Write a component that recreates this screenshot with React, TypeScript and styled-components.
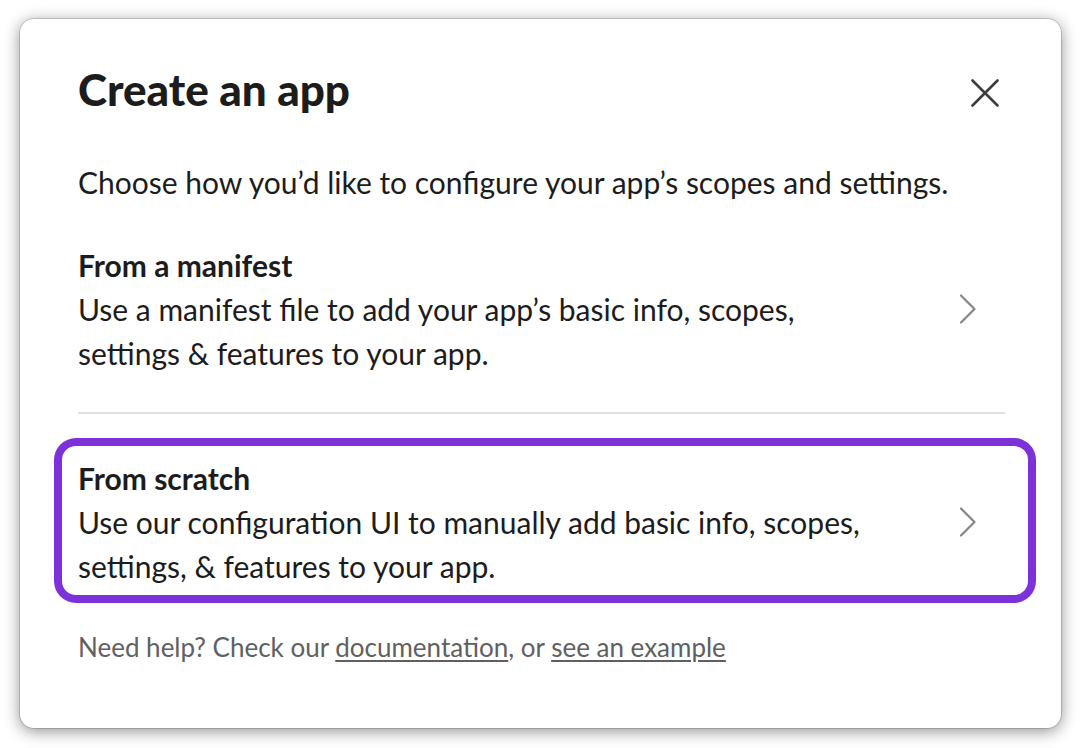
import React from "react";
import styled, { createGlobalStyle } from "styled-components";

const Global = createGlobalStyle`
  html, body { margin: 0; padding: 0; background: #ffffff; }
  body { font-family: Lato, "Noto Sans", sans-serif; color: #1d1c1d; }
  * { box-sizing: border-box; }
`;

const Page = styled.div`
  width: 1080px;
  height: 748px;
  padding: 19px 19px 0 20px;
`;

const Modal = styled.div`
  width: 1041px;
  height: 709px;
  background: #fff;
  border-radius: 14px;
  box-shadow: 0 0 0 1px rgba(0, 0, 0, 0.14), 0 3px 16px rgba(0, 0, 0, 0.45);
  display: flex;
  flex-direction: column;
  padding-top: 42px;
`;

const Header = styled.div`
  display: flex;
  align-items: center;
  justify-content: space-between;
  padding: 0 58px 0 58px;
  height: 56px;
`;

const Title = styled.h1`
  margin: 0;
  font-size: 44px;
  line-height: 56px;
  font-weight: 900;
  color: #1d1c1d;
`;

const CloseButton = styled.button`
  border: 0;
  background: none;
  padding: 0;
  margin-top: 8px;
  width: 36px;
  height: 36px;
  display: flex;
  align-items: center;
  justify-content: center;
  color: #3d3d3d;
  cursor: pointer;
`;

const Intro = styled.p`
  margin: 43px 0 0;
  padding: 0 58px;
  font-size: 30px;
  line-height: 44px;
`;

const Options = styled.div`
  margin: 21px 25px 0 34px;
  display: flex;
  flex-direction: column;
`;

const Option = styled.div<{ $focused?: boolean }>`
  display: flex;
  align-items: center;
  justify-content: space-between;
  padding: 18px 59px 15px 24px;
  border-radius: 22px;
  box-shadow: ${(p) => (p.$focused ? "inset 0 0 0 8px #7d31d9" : "none")};
  cursor: pointer;
`;

const OptionText = styled.div`
  display: flex;
  flex-direction: column;
  max-width: 800px;
`;

const OptionTitle = styled.div`
  font-size: 30px;
  line-height: 44px;
  font-weight: 700;
`;

const OptionDesc = styled.div`
  font-size: 30px;
  line-height: 44px;
`;

const Divider = styled.hr`
  border: 0;
  border-top: 2px solid #e0e0e0;
  margin: 22px 31px 24px 24px;
`;

const Footer = styled.p`
  margin: 29px 0 0;
  padding: 0 58px;
  font-size: 26px;
  line-height: 30px;
  color: #616061;
`;

const FooterLink = styled.a`
  color: #616061;
  text-decoration: underline;
  text-underline-offset: 3px;
`;

const Chevron = () => (
  <svg width="18" height="30" viewBox="0 0 18 30" fill="none">
    <path d="M2 1.5 L15.5 15 L2 28.5" stroke="#868686" strokeWidth="2.2" strokeLinecap="round" strokeLinejoin="round" />
  </svg>
);

const CloseIcon = () => (
  <svg width="28" height="28" viewBox="0 0 28 28" fill="none">
    <path d="M1.5 1.5 L26.5 26.5 M26.5 1.5 L1.5 26.5" stroke="currentColor" strokeWidth="2.6" strokeLinecap="round" />
  </svg>
);

export default function App() {
  return (
    <Page>
      <Global />
      <Modal>
        <Header>
          <Title>Create an app</Title>
          <CloseButton aria-label="Close">
            <CloseIcon />
          </CloseButton>
        </Header>
        <Intro>Choose how you’d like to configure your app’s scopes and settings.</Intro>
        <Options>
          <Option>
            <OptionText>
              <OptionTitle>From a manifest</OptionTitle>
              <OptionDesc>
                Use a manifest file to add your app’s basic info, scopes, settings &amp; features to your app.
              </OptionDesc>
            </OptionText>
            <Chevron />
          </Option>
          <Divider />
          <Option $focused>
            <OptionText>
              <OptionTitle>From scratch</OptionTitle>
              <OptionDesc>
                Use our configuration UI to manually add basic info, scopes, settings, &amp; features to your app.
              </OptionDesc>
            </OptionText>
            <Chevron />
          </Option>
        </Options>
        <Footer>
          Need help? Check our <FooterLink href="#">documentation</FooterLink>, or{" "}
          <FooterLink href="#">see an example</FooterLink>
        </Footer>
      </Modal>
    </Page>
  );
}
